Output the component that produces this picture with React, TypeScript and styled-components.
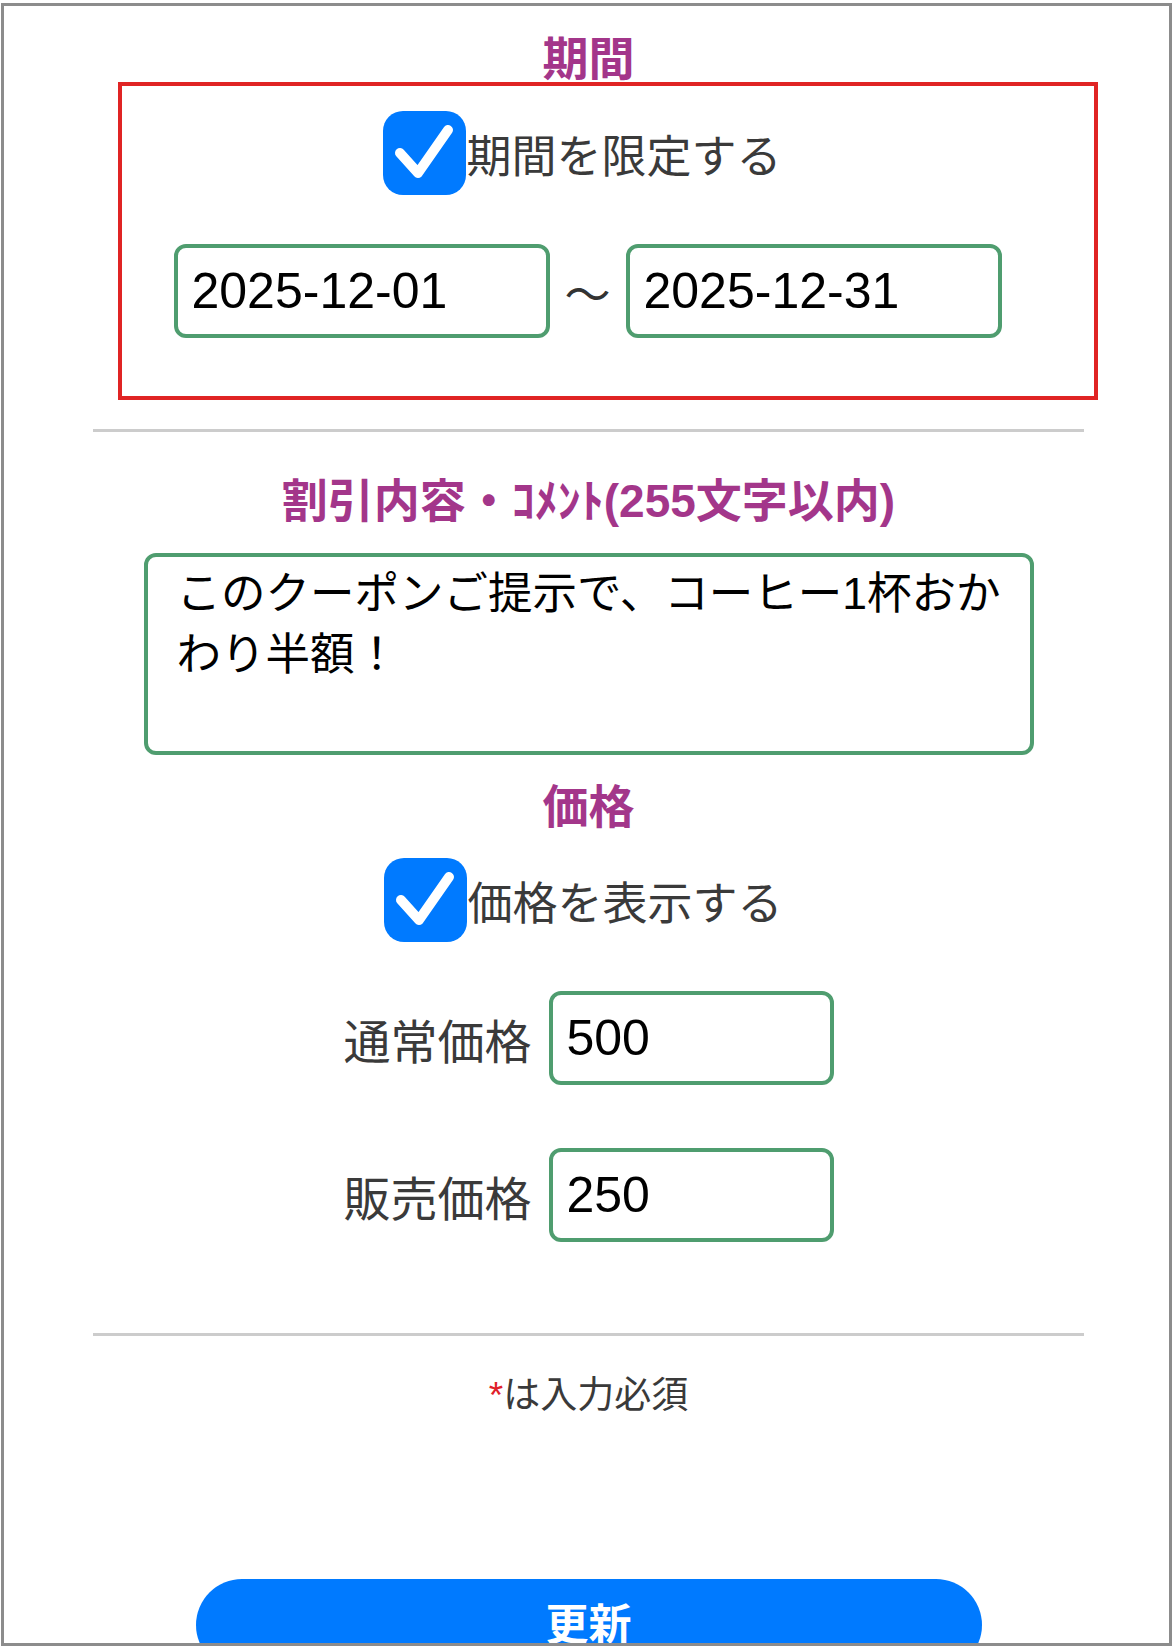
import React from "react";
import styled, { createGlobalStyle } from "styled-components";

const GlobalStyle = createGlobalStyle`
	html, body {
		margin: 0;
		padding: 0;
		background: #fff;
	}
	body {
		font-family: "Liberation Sans", "Noto Sans CJK JP", sans-serif;
	}
`;

const jp = `"Liberation Sans", "Noto Sans CJK JP", sans-serif`;

const Frame = styled.div`
	box-sizing: border-box;
	width: 1171px;
	height: 1643px;
	margin: 3px 0 0 1px;
	padding-left: 4px;
	border: 3px solid #8c8c8c;
	overflow: hidden;
	display: flex;
	flex-direction: column;
	align-items: center;
	background: #fff;

	& > * {
		flex-shrink: 0;
	}
`;

const SectionTitle = styled.h2<{ $top: number }>`
	margin: ${(p) => p.$top}px 0 0;
	font-family: ${jp};
	font-size: 46px;
	font-weight: 700;
	line-height: 46px;
	color: #a3368a;
	white-space: nowrap;
`;

const PeriodBox = styled.div`
	box-sizing: border-box;
	align-self: flex-start;
	margin-left: 110px;
	width: 980px;
	height: 318px;
	border: 4px solid #e02424;
	padding: 25px 41px 0 0;
	display: flex;
	flex-direction: column;
	align-items: center;
`;

const CheckRow = styled.label<{ $top?: number }>`
	display: flex;
	align-items: center;
	margin-top: ${(p) => p.$top ?? 0}px;
	margin-right: 10px;
`;

const CheckBox = styled.span`
	width: 83px;
	height: 84px;
	border-radius: 20px;
	background: #007aff;
	display: flex;
	align-items: center;
	justify-content: center;
	flex-shrink: 0;
`;

const CheckLabel = styled.span`
	font-family: ${jp};
	font-size: 45px;
	line-height: 56px;
	color: #3a3a3a;
	padding-top: 10px;
	white-space: nowrap;
`;

const DateRow = styled.div`
	display: flex;
	align-items: center;
	margin-top: 49px;
`;

const TextInput = styled.input<{ $width: number }>`
	box-sizing: border-box;
	width: ${(p) => p.$width}px;
	height: 94px;
	margin: 0;
	padding: 0 12px 0 14px;
	border: 4px solid #4f9d6f;
	border-radius: 12px;
	background: #fff;
	font-family: ${jp};
	font-size: 50px;
	color: #000;
	outline: none;
`;

const Tilde = styled.span`
	width: 76px;
	text-align: center;
	font-family: "Noto Sans CJK JP", sans-serif;
	font-size: 46px;
	color: #333;
`;

const Divider = styled.hr<{ $top: number }>`
	width: 991px;
	height: 3px;
	margin: ${(p) => p.$top}px 0 0;
	border: none;
	background: #cccccc;
`;

const Comment = styled.textarea`
	box-sizing: border-box;
	width: 890px;
	height: 202px;
	margin: 29px 0 0;
	padding: 6px 8px 0 29px;
	border: 4px solid #4f9d6f;
	border-radius: 12px;
	resize: none;
	font-family: ${jp};
	font-size: 44.5px;
	line-height: 61px;
	color: #000;
	outline: none;
	overflow: hidden;
`;

const PriceRow = styled.div<{ $top: number }>`
	display: flex;
	align-items: center;
	gap: 17px;
	margin-top: ${(p) => p.$top}px;
`;

const PriceLabel = styled.span`
	font-family: ${jp};
	font-size: 47px;
	color: #3a3a3a;
	white-space: nowrap;
`;

const Note = styled.p`
	margin: 37px 0 0;
	font-family: ${jp};
	font-size: 37px;
	line-height: 46px;
	color: #3a3a3a;
`;

const Required = styled.span`
	color: #e0202a;
	font-family: "Liberation Sans", sans-serif;
`;

const SubmitButton = styled.button`
	width: 786px;
	height: 92px;
	margin-top: 160px;
	border: none;
	border-radius: 46px;
	background: #007aff;
	color: #fff;
	font-family: ${jp};
	font-size: 43px;
	font-weight: 700;
	line-height: 92px;
	padding: 0;
`;

const Check = () => (
	<CheckBox>
		<svg width="83" height="84" viewBox="0 0 83 84">
			<polyline
				points="17,42 35,62 65,19"
				fill="none"
				stroke="#fff"
				strokeWidth="10"
				strokeLinecap="round"
				strokeLinejoin="round"
			/>
		</svg>
	</CheckBox>
);

const App = () => {
	return (
		<>
			<GlobalStyle />
			<Frame>
				<SectionTitle $top={30}>期間</SectionTitle>
				<PeriodBox>
					<CheckRow>
						<Check />
						<CheckLabel>期間を限定する</CheckLabel>
					</CheckRow>
					<DateRow>
						<TextInput $width={376} type="text" defaultValue="2025-12-01" />
						<Tilde>〜</Tilde>
						<TextInput $width={376} type="text" defaultValue="2025-12-31" />
					</DateRow>
				</PeriodBox>

				<Divider $top={29} />

				<SectionTitle $top={46}>割引内容・ｺﾒﾝﾄ(255文字以内)</SectionTitle>
				<Comment defaultValue="このクーポンご提示で、コーヒー1杯おかわり半額！" />

				<SectionTitle $top={29}>価格</SectionTitle>
				<CheckRow $top={28}>
					<Check />
					<CheckLabel>価格を表示する</CheckLabel>
				</CheckRow>

				<PriceRow $top={49}>
					<PriceLabel>通常価格</PriceLabel>
					<TextInput $width={285} type="text" defaultValue="500" />
				</PriceRow>
				<PriceRow $top={63}>
					<PriceLabel>販売価格</PriceLabel>
					<TextInput $width={285} type="text" defaultValue="250" />
				</PriceRow>

				<Divider $top={91} />

				<Note>
					<Required>*</Required>は入力必須
				</Note>

				<SubmitButton>更新</SubmitButton>
			</Frame>
		</>
	);
};

export default App;
